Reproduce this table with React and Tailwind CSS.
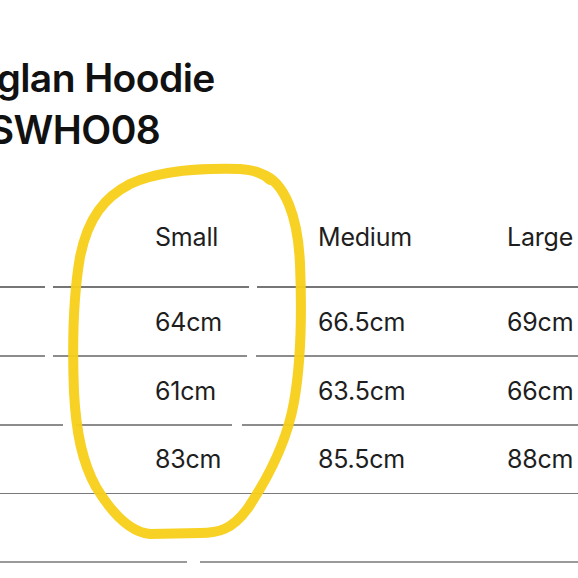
const sizes = ["Small", "Medium", "Large"];

const rows = [
  ["64cm", "66.5cm", "69cm"],
  ["61cm", "63.5cm", "66cm"],
  ["83cm", "85.5cm", "88cm"],
  ["", "", ""],
];

// gaps in each rule line, as [start, end] of the white breaks
const rules = [
  { gaps: [[45, 53], [249, 257]], cls: "h-[2px] bg-[#767676]" },
  { gaps: [[45, 53], [247, 256]], cls: "h-[2px] bg-[#8c8c8c]" },
  { gaps: [[63, 76], [232, 242]], cls: "h-[1.5px] bg-[#8c8c8c]" },
  { gaps: [], cls: "h-[1.5px] bg-[#7a7a7a]" },
  { gaps: [[187, 200]], cls: "h-[1.5px] bg-[#9a9a9a]" },
];

function Rule({ gaps, cls }) {
  const segs = [];
  let x = 0;
  gaps.forEach(([a, b]) => {
    segs.push([x, a]);
    x = b;
  });
  segs.push([x, 578]);
  return (
    <div className="flex w-full">
      {segs.map(([a, b], i) => (
        <div key={i} className={cls} style={{ marginLeft: i === 0 ? a : a - segs[i - 1][1], width: b - a }} />
      ))}
    </div>
  );
}

function Cells({ items }) {
  return (
    <div className="flex items-center h-full text-[25px] text-[#1e1e1e] tracking-[-0.2px]">
      <div className="w-[155px] shrink-0" />
      <div className="w-[163px] shrink-0">{items[0]}</div>
      <div className="w-[189px] shrink-0">{items[1]}</div>
      <div className="shrink-0 whitespace-nowrap">{items[2]}</div>
    </div>
  );
}

export default function App() {
  return (
    <div
      className="relative w-[578px] h-[578px] overflow-hidden bg-white"
      style={{ fontFamily: "Inter, 'Noto Sans', sans-serif" }}
    >
      <div className="pt-[52px] ml-[-50px] text-[39px] leading-[52px] font-semibold text-[#111] tracking-[-0.6px] whitespace-nowrap">
        <div>Raglan Hoodie</div>
        <div className="ml-[14px]">RSWHO08</div>
      </div>

      <div className="mt-[29px]">
        <div className="h-[101px] pt-[5px]">
          <Cells items={sizes} />
        </div>
        <Rule {...rules[0]} />
        {rows.map((r, i) => (
          <div key={i}>
            <div className="h-[67px] pt-[2px]">
              <Cells items={r} />
            </div>
            <Rule {...rules[i + 1]} />
          </div>
        ))}
      </div>

      <svg className="absolute left-0 top-0 pointer-events-none" width="578" height="578" viewBox="0 0 578 578">
        <path
          d="M262 174 C 285 182, 298 217, 300 264 C 302 312, 301 362, 294 402 C 287 442, 268 478, 248 508 C 232 530, 218 533, 200 533 L 150 534 C 128 532, 110 510, 96 487 C 82 462, 76 432, 74 392 C 72 342, 74 292, 80 257 C 88 217, 105 197, 130 184 C 160 170, 200 168, 240 169 C 252 170, 262 172, 270 180"
          fill="none"
          stroke="#f7cf17"
          strokeWidth="10"
          strokeLinecap="round"
          strokeLinejoin="round"
          opacity="0.95"
        />
      </svg>
    </div>
  );
}
